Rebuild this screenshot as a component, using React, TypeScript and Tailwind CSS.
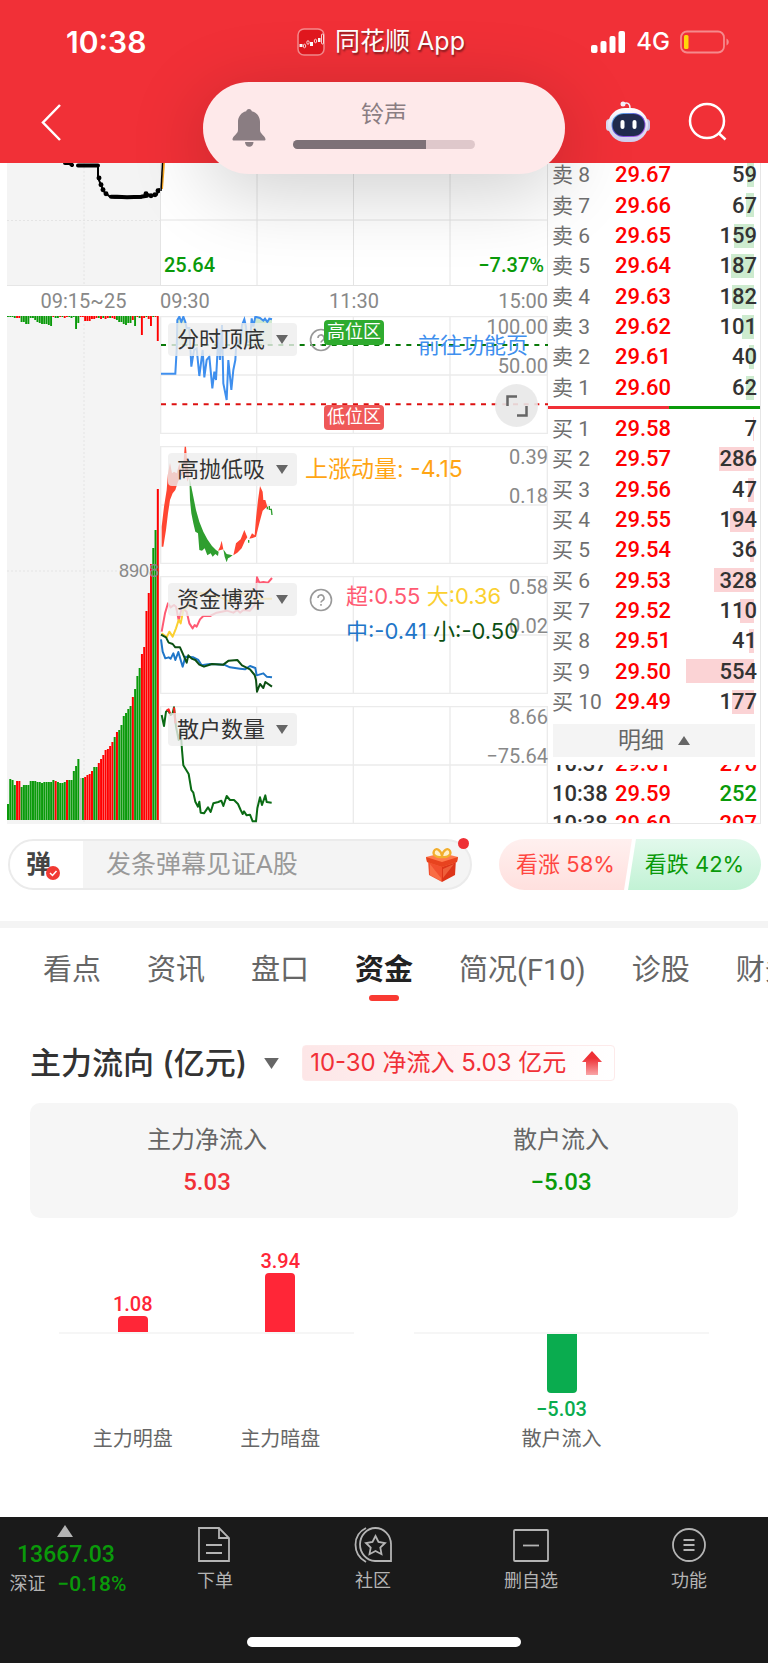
import type { ReactNode } from "react";

const din = "font-['Roboto','Noto_Sans_CJK_SC',sans-serif]";
const inter = "font-['Inter','Noto_Sans_CJK_SC',sans-serif]";

const sells: [string, string, number][] = [
  ["卖 8", "29.67", 59],
  ["卖 7", "29.66", 67],
  ["卖 6", "29.65", 159],
  ["卖 5", "29.64", 187],
  ["卖 4", "29.63", 182],
  ["卖 3", "29.62", 101],
  ["卖 2", "29.61", 40],
  ["卖 1", "29.60", 62],
];

const buys: [string, string, number][] = [
  ["买 1", "29.58", 7],
  ["买 2", "29.57", 286],
  ["买 3", "29.56", 47],
  ["买 4", "29.55", 194],
  ["买 5", "29.54", 36],
  ["买 6", "29.53", 328],
  ["买 7", "29.52", 110],
  ["买 8", "29.51", 41],
  ["买 9", "29.50", 554],
  ["买 10", "29.49", 177],
];

const ticks: [string, string, string, boolean][] = [
  ["10:37", "29.61", "276", true],
  ["10:38", "29.59", "252", false],
  ["10:38", "29.60", "297", true],
];

const tabs = ["看点", "资讯", "盘口", "资金", "简况(F10)", "诊股", "财务"];

// auction volume, one letter per bar: g = down, r = up, n = flat
const volume =
  "g16 g41 g40 g35 r39 r39 g33 g35 g35 g35 g39 g39 g39 g38 g38 g37 g38 g38 g38 g38 g40 r39 g38 g37 g37 g38 r40 g40 g40 g49 g54 g61 n42 g42 r43 r45 r46 r49 g53 g53 r57 r61 r65 r70 r71 r74 r78 g83 r88 g90 g95 g104 g107 g111 g114 r123 g131 g144 g152 r166 r173 r209 r227 r256 g272 g290 r331".split(" ");
const unmatched =
  "g1 g1 g1 g2 r2 r2 g6 g6 g8 g8 g2 g2 g4 g6 g7 g8 g8 g8 g9 g10 r1 g2 g2 r1 g1 r2 r1 g1 g2 g1 g13 g7 r1 r1 r5 r5 r5 r3 r3 r2 g2 r3 g2 r3 r2 g2 r2 r3 g4 g6 g6 g8 g9 g7 g7 r4 g10 r1 g2 r19 r2 g1 r3 r10 g1 r1 r25".split(" ");

const tone = (code: string) => (code[0] === "r" ? "#ff0000" : code[0] === "g" ? "#0a9a0a" : "#bbbbbb");

function Caret({ up, className = "h-[9px] w-3" }: { up?: boolean; className?: string }) {
  return (
    <svg viewBox="0 0 12 9" className={className} fill="currentColor" aria-hidden="true">
      <path d={up ? "M6 0 12 9H0z" : "M6 9 0 0h12z"} />
    </svg>
  );
}

function HelpIcon({ className = "" }: { className?: string }) {
  return (
    <button aria-label="说明" className={`h-6 w-6 text-[#999999] ${className}`}>
      <svg viewBox="0 0 24 24" fill="none" stroke="currentColor" strokeWidth="1.6">
        <circle cx="12" cy="12" r="10.500" />
        <path d="M9 10a3 3 0 1 1 4.400 2.600c-1 .6-1.400 1-1.400 2M12 16v1.800" />
      </svg>
    </button>
  );
}

function Robot() {
  return (
    <svg viewBox="0 0 46 44" className="h-[44px] w-[46px]" aria-hidden="true">
      <defs>
        <linearGradient id="shell" x1="0" y1="0" x2="0" y2="1">
          <stop offset="0" stopColor="#ffffff" />
          <stop offset="1" stopColor="#cfcdee" />
        </linearGradient>
        <linearGradient id="visor" x1="0" y1="0" x2="1" y2="1">
          <stop offset="0" stopColor="#5fd0f0" />
          <stop offset=".5" stopColor="#5a3fd0" />
          <stop offset="1" stopColor="#c26cf0" />
        </linearGradient>
      </defs>
      <path d="M18 4c4-2 7-1 7 4" fill="none" stroke="#f0eef8" strokeWidth="1.500" />
      <circle cx="18" cy="4" r="2.500" fill="#f4f2fb" />
      <rect x="1" y="19" width="7" height="12" rx="3.500" fill="#dcdaf2" />
      <rect x="38" y="19" width="7" height="12" rx="3.500" fill="#c5c3e6" />
      <rect x="3" y="8" width="40" height="34" rx="17" fill="url(#shell)" />
      <rect x="6.500" y="13" width="34" height="24" rx="12" fill="url(#visor)" />
      <rect x="7.500" y="14" width="32" height="22" rx="11" fill="#202b4e" />
      <rect x="15.500" y="20" width="4" height="9" rx="2" fill="#fff" />
      <rect x="27.500" y="20" width="4" height="9" rx="2" fill="#fff" />
    </svg>
  );
}

function Header() {
  return (
    <header className="relative z-10 h-[163px] bg-[#f13037] text-white">
      <div className="relative flex h-[84px] items-center justify-between pr-[38px] pl-[66px]">
        <span className={`w-[150px] text-[30px] leading-9 font-semibold ${inter}`}>10:38</span>
        <div className="flex items-center gap-2.5">
          <svg viewBox="0 0 28 28" className="h-7 w-7" aria-hidden="true">
            <rect x="1" y="1" width="26" height="26" rx="6" fill="#e2181f" stroke="#f58a8d" strokeWidth="1.500" />
            <g fill="#fff">
              <rect x="2.500" y="16" width="3" height="3" />
              <rect x="13" y="14" width="3" height="4" />
              <rect x="21" y="10" width="2.500" height="4" />
            </g>
            <g fill="none" stroke="#fff" strokeWidth=".8">
              <ellipse cx="7.500" cy="18" rx="1.200" ry="1.800" />
              <ellipse cx="11" cy="14.500" rx="1.200" ry="1.800" />
              <ellipse cx="18.500" cy="13" rx="1.200" ry="1.800" />
              <rect x="24.500" y="6" width="2" height="10" rx="1" />
            </g>
          </svg>
          <span className={`text-[25px] text-shadow-[1px_2px_2px_rgba(0,0,0,0.45)] ${inter}`}>同花顺 App</span>
        </div>
        <div className="flex w-[184px] items-center justify-end gap-2.5">
          <svg viewBox="0 0 35 22" className="h-[22px] w-[35px]" fill="#fff" aria-hidden="true">
            <rect x="0" y="14" width="6.500" height="8" rx="2" />
            <rect x="9.500" y="10" width="6" height="12" rx="2" />
            <rect x="18.500" y="5" width="6" height="17" rx="2" />
            <rect x="27.500" y="0" width="6.500" height="22" rx="2" />
          </svg>
          <span className={`text-2xl font-medium ${inter}`}>4G</span>
          <svg viewBox="0 0 50 24" className="h-6 w-[50px]" aria-hidden="true">
            <rect x="1" y="1.500" width="43" height="21" rx="6" fill="none" stroke="#f58a8d" strokeWidth="1.800" />
            <rect x="4" y="5" width="4.500" height="14" rx="1.500" fill="#ffd60a" />
            <path d="M46.500 8.500c3 1.500 3 5.500 0 7z" fill="#f58a8d" />
          </svg>
        </div>
      </div>
      <div className="relative flex h-[75px] items-center justify-between px-10">
        <button aria-label="返回">
          <svg viewBox="0 0 22 38" className="h-[38px] w-[22px]" fill="none" stroke="#fff" strokeWidth="2.500">
            <path d="M20 2 3 19.500 20 37" />
          </svg>
        </button>
        <div className="flex items-center gap-[37px]">
          <button aria-label="助手">
            <Robot />
          </button>
          <button aria-label="搜索">
            <svg viewBox="0 0 40 40" className="h-10 w-10" fill="none" stroke="#fff" strokeWidth="2.500">
              <circle cx="19" cy="19" r="17" />
              <path d="m31 31.500 6.500 6" />
            </svg>
          </button>
        </div>
      </div>

      {/* ringer volume overlay */}
      <div className="absolute top-[82px] left-1/2 flex h-[92px] w-[362px] -translate-x-1/2 items-center rounded-full bg-[#fee9ea] pl-[29px] text-[#8a7d82] shadow-[0_16px_80px_rgba(0,0,0,0.2)]">
        <svg viewBox="0 0 34 40" className="h-10 w-[34px]" fill="currentColor" aria-hidden="true">
          <path d="M17 1c1.600 0 2.600 1 2.800 2.300C25 4.500 28 9 28 14v8c0 4 5.500 6 5.500 9.500 0 .8-.5 1-1.500 1H2c-1 0-1.500-.2-1.500-1C.5 28 6 26 6 22v-8C6 9 9 4.500 14.200 3.300 14.400 2 15.400 1 17 1zM13 34h8.500a4.200 4.800 0 0 1-8.500 0z" />
        </svg>
        <div className="ml-[27px] flex w-[182px] flex-col items-center gap-3 pb-2">
          <span className="text-[23px] leading-7">铃声</span>
          <div className="h-[9px] w-full overflow-hidden rounded-full bg-[#dfc8cb]">
            <div className="h-full w-[73%] bg-[#7d7177]" />
          </div>
        </div>
      </div>
    </header>
  );
}

function AuctionColumn() {
  return (
    <div className="flex flex-col">
      <svg viewBox="0 0 153 123" preserveAspectRatio="none" className="h-[123px] w-full border-b border-[#e6e6e6] bg-[#f4f4f4]">
        <path d="M77 0V123M0 58H153" stroke="#e4e4e4" strokeDasharray="2 2" fill="none" />
        <path d="M58 0h5l2 2M71 2.500H91M104 34l6 0 10 .5 14-.5 6-1" stroke="#000" strokeWidth="4" strokeLinecap="round" fill="none" />
        <path d="M91 2V15l3 7 3 7 6 5 5 1h26l6-4 5 2 5-1 1-5 3-1" stroke="#000" strokeWidth="2" fill="none" />
        <g fill="#000">
          <circle cx="92" cy="15" r="2.500" />
          <circle cx="94" cy="22" r="2.500" />
          <circle cx="96" cy="27" r="2.500" />
          <circle cx="99" cy="31" r="2.500" />
          <circle cx="139" cy="31" r="2.500" />
          <circle cx="144" cy="33" r="2.500" />
          <circle cx="148" cy="32" r="2.500" />
          <circle cx="151" cy="28" r="2.500" />
        </g>
      </svg>
      <div className={`flex h-[30px] items-center justify-center text-xl leading-6 text-[#888888] ${din}`}>
        09:15~25
      </div>
      <div className="relative h-[508px] bg-[#f4f4f4]">
        <svg viewBox="0 0 153 508" preserveAspectRatio="none" className="absolute inset-0 h-full w-full">
          <path d="M77 0V508M0 255H153" stroke="#e4e4e4" strokeDasharray="2 2" fill="none" />
          {unmatched.map((b, i) => (
            <rect key={i} x={i * 2.27} y="0" width="1.9" height={Number(b.slice(1))} fill={tone(b)} />
          ))}
          {volume.map((b, i) => (
            <rect key={i} x={i * 2.27} y={504 - Number(b.slice(1))} width="2" height={Number(b.slice(1))} fill={tone(b)} />
          ))}
        </svg>
        <span className="absolute top-[245px] right-[1px] text-lg leading-5 text-[#888888]">8908</span>
      </div>
    </div>
  );
}

interface PanelProps {
  name: string;
  high: string;
  mid: string;
  chart: ReactNode;
  children?: ReactNode;
}

function Panel({ name, high, mid, chart, children }: PanelProps) {
  return (
    <div className="relative h-[118px]">
      <svg viewBox="0 0 1164 354" preserveAspectRatio="none" className="absolute inset-0 h-full w-full" fill="none">
        <path d="M2 2H1162V352H2zM0 177H1164M290 0V354M580 0V354M870 0V354" stroke="#ebebeb" strokeWidth="4" />
        {chart}
      </svg>
      <div className={`absolute -top-px right-0 flex flex-col gap-[15px] text-right text-xl leading-6 text-[#888888] ${din}`}>
        <span>{high}</span>
        <span>{mid}</span>
      </div>
      <button className="absolute top-[7px] left-2 flex h-[33px] w-[129px] items-center justify-between rounded bg-[#eeeeee]/80 px-[9px] text-[22px] text-[#333333]">
        {name}
        <Caret className="h-[9px] w-3 text-[#666666]" />
      </button>
      {children}
    </div>
  );
}

const topBottomChart = (
  <g transform="translate(-30 -48)" strokeWidth="6">
    <path
      d="M80 135 82 60 88 50 94 66 100 50 106 66 110 84H118L122 135zM274 135 276 75 283 58 288 80 291 135zM299 135 305 55 310 80 316 50 330 54 340 62 345 56 352 66 358 56 366 58V135z"
      fill="#cfe9cf"
    />
    <path d="M33 135H1194" stroke="#0a7a0a" strokeDasharray="15 17" />
    <path d="M33 313H1194" stroke="#dd1111" strokeDasharray="15 17" />
    <path
      d="M33 221H76L80 150 82 60 88 50 94 66 100 50 106 66 110 84H118L124 200 132 150 140 145 148 228 158 150 163 232 170 180 178 170 187 265 193 215 198 240 205 110 210 180 216 75 220 250 230 300 235 180 244 270 250 210 256 180 260 110 270 135 276 75 283 58 288 80 292 125H300L305 55 310 80 316 50 330 54 340 62 345 56 352 66 358 56 366 58"
      stroke="#3f8fee"
    />
  </g>
);

const swingChart = (
  <g transform="translate(-30 -438)">
    <path
      d="M35 740 35 680 42 620 50 570 54 520 60 488 66 520 72 515 80 520 88 490 95 520 101 480 104 440 108 440 112 490 118 530 112 545 104 500 100 520 92 530 84 545 76 570 68 580 60 600 54 640 48 690 40 740zM204 752 210 740 215 722 220 748zM250 766 258 730 272 718 283 690 292 712 285 722 275 745 262 758zM298 716 306 700 314 706 318 655 324 600 330 558 338 575 340 600 346 600 352 620 346 625 338 632 328 670 318 710 308 714z"
      fill="#ff4632"
    />
    <path
      d="M118 530 124 560 130 590 138 630 148 665 160 695 172 718 186 738 198 750 206 755 204 768 196 762 188 770 182 760 172 766 164 745 156 752 148 750 144 700 136 695 130 670 124 640 120 600zM220 748 230 762 248 766 240 772 234 775 230 787 224 770z"
      fill="#2f9e2f"
    />
    <path d="M352 620V628M358 618V628H364L366 645M296 720v8" stroke="#2f9e2f" strokeWidth="4" />
  </g>
);

const fundChart = (
  <g transform="translate(-30 -48)" strokeWidth="6" strokeLinejoin="round">
    <path
      d="M35 215 45 160 54 130 62 142 72 135 78 140 86 180 94 150 104 150 110 155 118 190 128 205 134 195 140 200 150 178 160 168H180L200 158 215 155 230 152 250 158 262 150 270 158 280 150 300 152 314 135 318 100 321 52 328 68 340 66 354 68 366 54"
      stroke="#ff5a72"
    />
    <path d="M35 220 50 232 58 215 68 230 78 205 86 180 92 190 100 150 112 140 122 112 140 105 150 98 170 102 190 110 210 112 240 125 260 105 280 100 300 112 318 118 340 116H366" stroke="#fbd030" />
    <path d="M33 238 38 275 46 295 56 292 62 296 70 280 76 300 85 276 92 300 98 320 106 290 130 292 145 300 155 316 180 312 222 314 240 322 270 326 285 328 300 318 316 324 320 346 340 340 350 350 366 352" stroke="#1f76c8" />
    <path d="M33 224 48 232 56 248 68 252 76 262 90 262 98 280 110 308 115 286 125 296 136 300 148 314 162 320 186 312 220 314 236 302 262 300 276 316 300 328 314 345 318 360 321 395 330 372 340 384 346 366 366 380" stroke="#0b4f12" />
  </g>
);

const retailChart = (
  <g transform="translate(-30 -438)" strokeWidth="6" strokeLinejoin="round" stroke="#0a6b14">
    <path d="M35 465 42 498 48 455 54 450 62 465 68 460 72 442 78 500 86 540 92 510 96 570 100 616 116 642 124 690 130 698 136 725 144 740 148 725 152 758 162 760 174 742 182 756 190 730 205 726 214 722 220 738 230 708 240 720 252 720 264 732 272 750 278 762 282 754 290 766 300 764 308 784H318L322 745 330 712 336 735 346 706 350 726 365 728" />
    <path d="M50 452 56 448 60 460M72 442 76 490" stroke="#ff2020" />
  </g>
);

function ChartColumn() {
  return (
    <div className="flex flex-col">
      <div className={`relative h-[123px] text-xl leading-6 font-medium text-[#0a9a0a] ${din}`}>
        <svg viewBox="0 0 388 123" preserveAspectRatio="none" className="absolute inset-0 h-full w-full" fill="none">
          <path d="M.5 0V123M97 0V123M193.500 0V123M290 0V123M387.500 0V123M0 57H388M0 122.500H388" stroke="#e4e4e4" />
          <path d="M2 26 4 0" stroke="#f5a623" strokeWidth="2" />
          <path d="M1 28 2.500 0" stroke="#000" strokeWidth="1.500" />
        </svg>
        <div className="relative flex h-full items-end justify-between px-1 pb-[9px]">
          <span>25.64</span>
          <span>−7.37%</span>
        </div>
      </div>
      <div className={`flex h-[30px] items-center justify-between text-xl leading-6 text-[#888888] ${din}`}>
        <span>09:30</span>
        <span>11:30</span>
        <span>15:00</span>
      </div>
      <div className="flex flex-col gap-3">
        <Panel name="分时顶底" high="100.00" mid="50.00" chart={topBottomChart}>
          <HelpIcon className="absolute top-3 left-[149px]" />
          <span className="absolute top-1 left-[164px] rounded bg-[#2fab2f] px-[3px] text-lg leading-[25px] text-white">
            高位区
          </span>
          <span className="absolute top-[89px] left-[164px] rounded bg-[#ef5858] px-[3px] text-lg leading-[25px] text-white">
            低位区
          </span>
          <a href="#feature" className="absolute top-4 right-5 text-[22px] leading-7 text-[#3f8fee]">
            前往功能页
          </a>
          <button
            aria-label="全屏"
            className="absolute top-[68px] right-[10px] flex h-[43px] w-[43px] items-center justify-center rounded-full bg-[#e8e8e8]/90"
          >
            <svg viewBox="0 0 22 22" className="h-[22px] w-[22px]" fill="none" stroke="#666" strokeWidth="2.500">
              <path d="M1.500 11V1.500H11M20.500 11v9.500H11" />
            </svg>
          </button>
        </Panel>
        <Panel name="高抛低吸" high="0.39" mid="0.18" chart={swingChart}>
          <span className={`absolute top-[7px] left-[145px] text-[23px] leading-8 text-[#ffa514] ${inter}`}>
            上涨动量: -4.15
          </span>
        </Panel>
        <Panel name="资金博弈" high="0.58" mid="0.02" chart={fundChart}>
          <HelpIcon className="absolute top-3 left-[149px]" />
          <div className={`absolute top-[3px] left-[186px] text-[22px] leading-[35px] whitespace-nowrap ${inter}`}>
            <p>
              <span className="text-[#ff5a72]">超:0.55</span> <span className="text-[#fbd030]">大:0.36</span>
            </p>
            <p>
              <span className="text-[#1f76c8]">中:-0.41</span> <span className="text-[#0b4f12]">小:-0.50</span>
            </p>
          </div>
        </Panel>
        <Panel name="散户数量" high="8.66" mid="−75.64" chart={retailChart} />
      </div>
    </div>
  );
}

function BookRows({ rows, bar }: { rows: [string, string, number][]; bar: string }) {
  return (
    <tbody>
      {rows.map(([level, price, qty]) => (
        <tr key={level}>
          <th className="w-[63px] p-0 text-left text-[21px] font-normal text-[#707070]">{level}</th>
          <td className="p-0 text-[22px] font-medium text-[#ff0000]">{price}</td>
          <td className="relative w-[80px] p-0 text-right text-[22px] font-medium text-[#333333]">
            <span className={`absolute top-[3px] right-[3px] h-6 ${bar}`} style={{ width: Math.round(qty * 0.123) }} />
            <span className="relative">{qty}</span>
          </td>
        </tr>
      ))}
    </tbody>
  );
}

function OrderBook() {
  return (
    <div className={`h-[661px] overflow-hidden border-r border-b border-[#e6e6e6] leading-6 ${din}`}>
      <div className="-mt-[3px] pr-[3px] pl-1">
        <table className="h-[243px] w-full">
          <BookRows rows={sells} bar="bg-[#cdebcf]" />
        </table>
      </div>
      <div className="mt-[3px] flex h-[3px]">
        <div className="w-[57%] bg-[#f13037]" />
        <div className="flex-1 bg-[#0a9a0a]" />
      </div>
      <div className="mt-[5px] pr-[3px] pl-1">
        <table className="h-[303px] w-full">
          <BookRows rows={buys} bar="bg-[#fbd3d5]" />
        </table>
      </div>
      <div className="mt-[7px] px-[5px]">
        <button className="flex h-[33px] w-full items-center justify-center gap-3.5 bg-[#f4f4f4] text-[23px] text-[#666666]">
          明细
          <Caret up />
        </button>
      </div>
      <div className="mt-2 h-[59px] overflow-hidden pr-[3px] pl-1">
        <table className="-mt-4 h-[90px] w-full text-[22px] font-medium">
          <tbody>
            {ticks.map(([time, price, qty, up], i) => (
              <tr key={i}>
                <td className="w-[63px] p-0 text-[#333333]">{time}</td>
                <td className="p-0 text-[#ff0000]">{price}</td>
                <td className={`p-0 text-right ${up ? "text-[#ff0000]" : "text-[#0a9a0a]"}`}>{qty}</td>
              </tr>
            ))}
          </tbody>
        </table>
      </div>
    </div>
  );
}

function DanmuBar() {
  return (
    <div className="flex items-center justify-between pt-[15px] pr-[7px] pb-[31px] pl-2">
      <label className="relative flex h-[51px] w-[464px] items-center rounded-full border-2 border-[#ebebeb] bg-[#f4f4f4]">
        <span className="relative flex h-full w-[73px] shrink-0 items-center rounded-l-full bg-white pl-4 text-[25px] font-bold text-[#444444]">
          弹
          <svg viewBox="0 0 14 14" className="absolute bottom-2 left-9 h-3.5 w-3.5" aria-hidden="true">
            <circle cx="7" cy="7" r="7" fill="#f13a33" />
            <path d="m4 7 2.500 2.500L10.500 5" fill="none" stroke="#fff" strokeWidth="1.500" />
          </svg>
        </span>
        <input
          placeholder="发条弹幕见证A股"
          aria-label="发条弹幕"
          className="min-w-0 flex-1 bg-transparent pl-[23px] text-[25px] outline-none placeholder:text-[#999999]"
        />
        <svg viewBox="0 0 32 36" className="mr-3 h-9 w-8" aria-hidden="true">
          <path d="M2 12 16 17V35L3 28z" fill="#f2502f" />
          <path d="M30 12 16 17V35L29 28z" fill="#dd3519" />
          <path d="M0 10 16 6 32 10 31 15 16 20 1 15z" fill="#ff7a4d" />
          <path d="M0 10 16 15 32 10 31 15 16 20 1 15z" fill="#e8431f" />
          <path d="M4 17 15 31v3L4 28zM28 17 17 31v-9z" fill="#ff8a5c" opacity=".5" />
          <path d="M16 10C11 11 6 8 8 4s7-1 8 5c1-6 6-9 8-5s-3 7-8 6z" fill="#fff0c8" stroke="#f2ae2e" strokeWidth="2.200" />
        </svg>
        <span className="absolute -top-[3px] right-[1px] h-[11px] w-[11px] rounded-full bg-[#ee3035]" />
      </label>
      <div className={`flex h-[51px] w-[262px] text-[22px] ${inter}`}>
        <button className="flex-1 rounded-l-full bg-linear-to-b from-[#fff0ef] to-[#ffe0de] text-[#ff4640] [clip-path:polygon(0_0,100%_0,calc(100%-8px)_100%,0_100%)]">
          看涨 58%
        </button>
        <button className="-ml-1 flex-1 rounded-r-full bg-linear-to-b from-[#e2f9ec] to-[#c2f2d5] text-[#0a9a0a] [clip-path:polygon(8px_0,100%_0,100%_100%,0_100%)]">
          看跌 42%
        </button>
      </div>
    </div>
  );
}

function Bar({ value, size, down }: { value: string; size: number; down?: boolean }) {
  return (
    <div className={`flex flex-col items-center ${din}`}>
      {!down && <span className="text-xl leading-6 font-medium text-[#ff2637]">{value}</span>}
      <div className={down ? "w-[30px] rounded-b bg-[#0aac4f]" : "w-[30px] rounded-t bg-[#ff2637]"} style={{ height: size }} />
      {down && <span className="mt-1 text-xl leading-6 font-medium text-[#0aac4f]">{value}</span>}
    </div>
  );
}

function FundFlow() {
  return (
    <section>
      <div className={`flex items-center px-[30px] pt-[38px] ${inter}`}>
        <h2 className="flex items-center gap-[17px] text-[31px] leading-10 font-medium text-[#333333]">
          主力流向 (亿元)
          <Caret className="h-[11px] w-[15px] text-[#666666]" />
        </h2>
        <p className="ml-[23px] flex h-9 items-center gap-4 rounded border border-[#fdeaea] bg-linear-to-r from-[#fde6e7] to-white pr-3 pl-[7px] text-2xl text-[#f13037]">
          10-30 净流入 5.03 亿元
          <svg viewBox="0 0 20 24" className="h-6 w-5" aria-hidden="true">
            <linearGradient id="rise" x1="0" y1="0" x2="0" y2="1">
              <stop offset=".3" stopColor="#ee3035" />
              <stop offset="1" stopColor="#f9a5a7" />
            </linearGradient>
            <path d="M10 0 20 11H16V24H4V11H0z" fill="url(#rise)" />
          </svg>
        </p>
      </div>

      <dl className="mx-[30px] mt-5 grid h-[115px] grid-cols-2 rounded-[10px] bg-[#f6f6f6] pt-[21px] text-center text-2xl">
        <div>
          <dt className="leading-8 text-[#666666]">主力净流入</dt>
          <dd className={`mt-2.5 leading-8 font-medium text-[#f13037] ${din}`}>5.03</dd>
        </div>
        <div>
          <dt className="leading-8 text-[#666666]">散户流入</dt>
          <dd className={`mt-2.5 leading-8 font-medium text-[#0a9a0a] ${din}`}>−5.03</dd>
        </div>
      </dl>

      <div className="grid grid-cols-2 gap-[60px] px-[59px] pb-[65px] text-center text-xl leading-[26px] text-[#666666]">
        <div>
          <div className="grid h-[116px] grid-cols-2 items-end border-b-2 border-[#f6f6f6]">
            <Bar value="1.08" size={16} />
            <Bar value="3.94" size={59} />
          </div>
          <div className="grid grid-cols-2 pt-[92px]">
            <span>主力明盘</span>
            <span>主力暗盘</span>
          </div>
        </div>
        <div>
          <div className="h-[116px] border-b-2 border-[#f6f6f6]" />
          <div className="h-[92px]">
            <Bar value="−5.03" size={59} down />
          </div>
          <span>散户流入</span>
        </div>
      </div>
    </section>
  );
}

function NavItem({ label, children }: { label: string; children: ReactNode }) {
  return (
    <button className="flex flex-1 flex-col items-center gap-[5px] pt-[9px] text-lg leading-[25px]">
      <svg viewBox="0 0 38 38" className="h-[38px] w-[38px]" fill="none" stroke="currentColor" strokeWidth="1.800">
        {children}
      </svg>
      {label}
    </button>
  );
}

function BottomNav() {
  return (
    <footer className="flex h-[146px] flex-col justify-between bg-[#1a1a1a] pb-4 text-[#b4b4b4]">
      <nav className="flex">
        <button className={`flex w-[136px] flex-col items-center pt-2 font-medium text-[#0a9a0a] ${din}`}>
          <Caret up className="mr-1.5 h-3 w-4 text-[#b4b4b4]" />
          <span className="mt-0.5 mr-1 text-[23px] leading-8">13667.03</span>
          <span className="flex items-center gap-3 text-[21px] leading-[26px]">
            <span className="text-lg leading-[26px] font-normal text-[#b4b4b4]">深证</span>−0.18%
          </span>
        </button>
        <NavItem label="下单">
          <path d="M3 2H23L33 12V35H3zM23 2V12H33M10 19H26M10 27H26" />
        </NavItem>
        <NavItem label="社区">
          <path d="M12 2C-2 9-2 28 12 36M37 35V18A15.500 16.500 0 1 0 21 35z" />
          <path d="m21.500 10 3 6 6.500 1-4.700 4.600 1.200 6.600-6-3.200-6 3.200 1.200-6.600L12 17l6.500-1z" />
        </NavItem>
        <NavItem label="删自选">
          <rect x="2" y="4" width="34" height="31" rx="1" />
          <path d="M11 19.500H27" />
        </NavItem>
        <NavItem label="功能">
          <circle cx="19" cy="19" r="16" />
          <path d="M13.500 14H24.500M13.500 19H24.500M13.500 24H24.500" />
        </NavItem>
      </nav>
      <div className="h-2.5 w-[274px] self-center rounded-full bg-white" />
    </footer>
  );
}

export default function App() {
  return (
    <div className="overflow-hidden bg-white font-['Liberation_Sans','Noto_Sans_CJK_SC',sans-serif]">
      <Header />
      <main>
        <section className="grid grid-cols-[153fr_388fr_213fr] px-[7px]">
          <AuctionColumn />
          <ChartColumn />
          <OrderBook />
        </section>
        <DanmuBar />
        <nav
          className={`flex h-[84px] items-center gap-[46px] overflow-hidden border-t-[7px] border-[#f4f4f4] pt-2 pl-[43px] text-[29px] whitespace-nowrap text-[#666666] ${din}`}
        >
          {tabs.map((t) => (
            <button
              key={t}
              className={
                t === "资金"
                  ? "relative font-bold text-[#222222] after:absolute after:-bottom-[9px] after:left-1/2 after:h-1.5 after:w-[30px] after:-translate-x-1/2 after:rounded-full after:bg-[#f93a32]"
                  : ""
              }
            >
              {t}
            </button>
          ))}
        </nav>
        <FundFlow />
      </main>
      <BottomNav />
    </div>
  );
}
